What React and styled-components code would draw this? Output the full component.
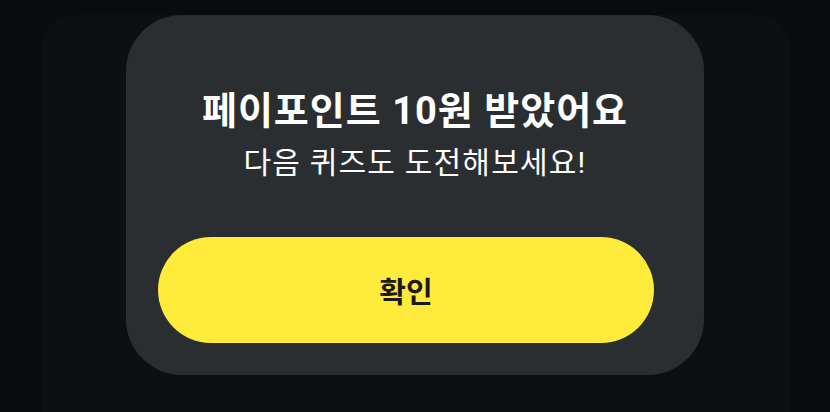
import React from "react";
import styled, { createGlobalStyle } from "styled-components";

const Global = createGlobalStyle`
  html, body { margin: 0; padding: 0; background: #0a0b0d; }
  body { font-family: Roboto, "Noto Sans CJK KR", "Noto Sans", sans-serif; }
  #root { height: 412px; overflow: hidden; }
`;

const Page = styled.div`
  height: 412px;
  padding: 15px 40px 0 41px;
  box-sizing: border-box;
  display: flex;
`;

const Backdrop = styled.div`
  flex: 1;
  background: #0e0f11;
  border-radius: 32px 32px 0 0;
  padding: 0 86px 0 85px;
  display: flex;
  flex-direction: column;
`;

const Card = styled.div`
  background: #2b2e31;
  border-radius: 56px;
  height: 360px;
  box-sizing: border-box;
  padding: 71px 50px 32px 32px;
  display: flex;
  flex-direction: column;
`;

const Title = styled.h1`
  margin: 0 -18px 0 0;
  font-size: 38px;
  line-height: 50px;
  font-weight: 700;
  color: #ffffff;
  text-align: center;
  letter-spacing: 1px;
  white-space: nowrap;
`;

const Subtitle = styled.p`
  margin: 6px -18px 0 0;
  font-size: 30px;
  line-height: 42px;
  font-weight: 400;
  color: #ffffff;
  text-align: center;
  letter-spacing: 1.2px;
  white-space: nowrap;
`;

const Button = styled.button`
  margin-top: auto;
  height: 106px;
  border: none;
  border-radius: 53px;
  background: #ffeb3b;
  color: #1a1a1a;
  font-family: inherit;
  font-size: 29px;
  font-weight: 700;
  cursor: pointer;
`;

export default function App() {
  return (
    <>
      <Global />
      <Page>
        <Backdrop>
          <Card>
            <Title>페이포인트 10원 받았어요</Title>
            <Subtitle>다음 퀴즈도 도전해보세요!</Subtitle>
            <Button>확인</Button>
          </Card>
        </Backdrop>
      </Page>
    </>
  );
}
